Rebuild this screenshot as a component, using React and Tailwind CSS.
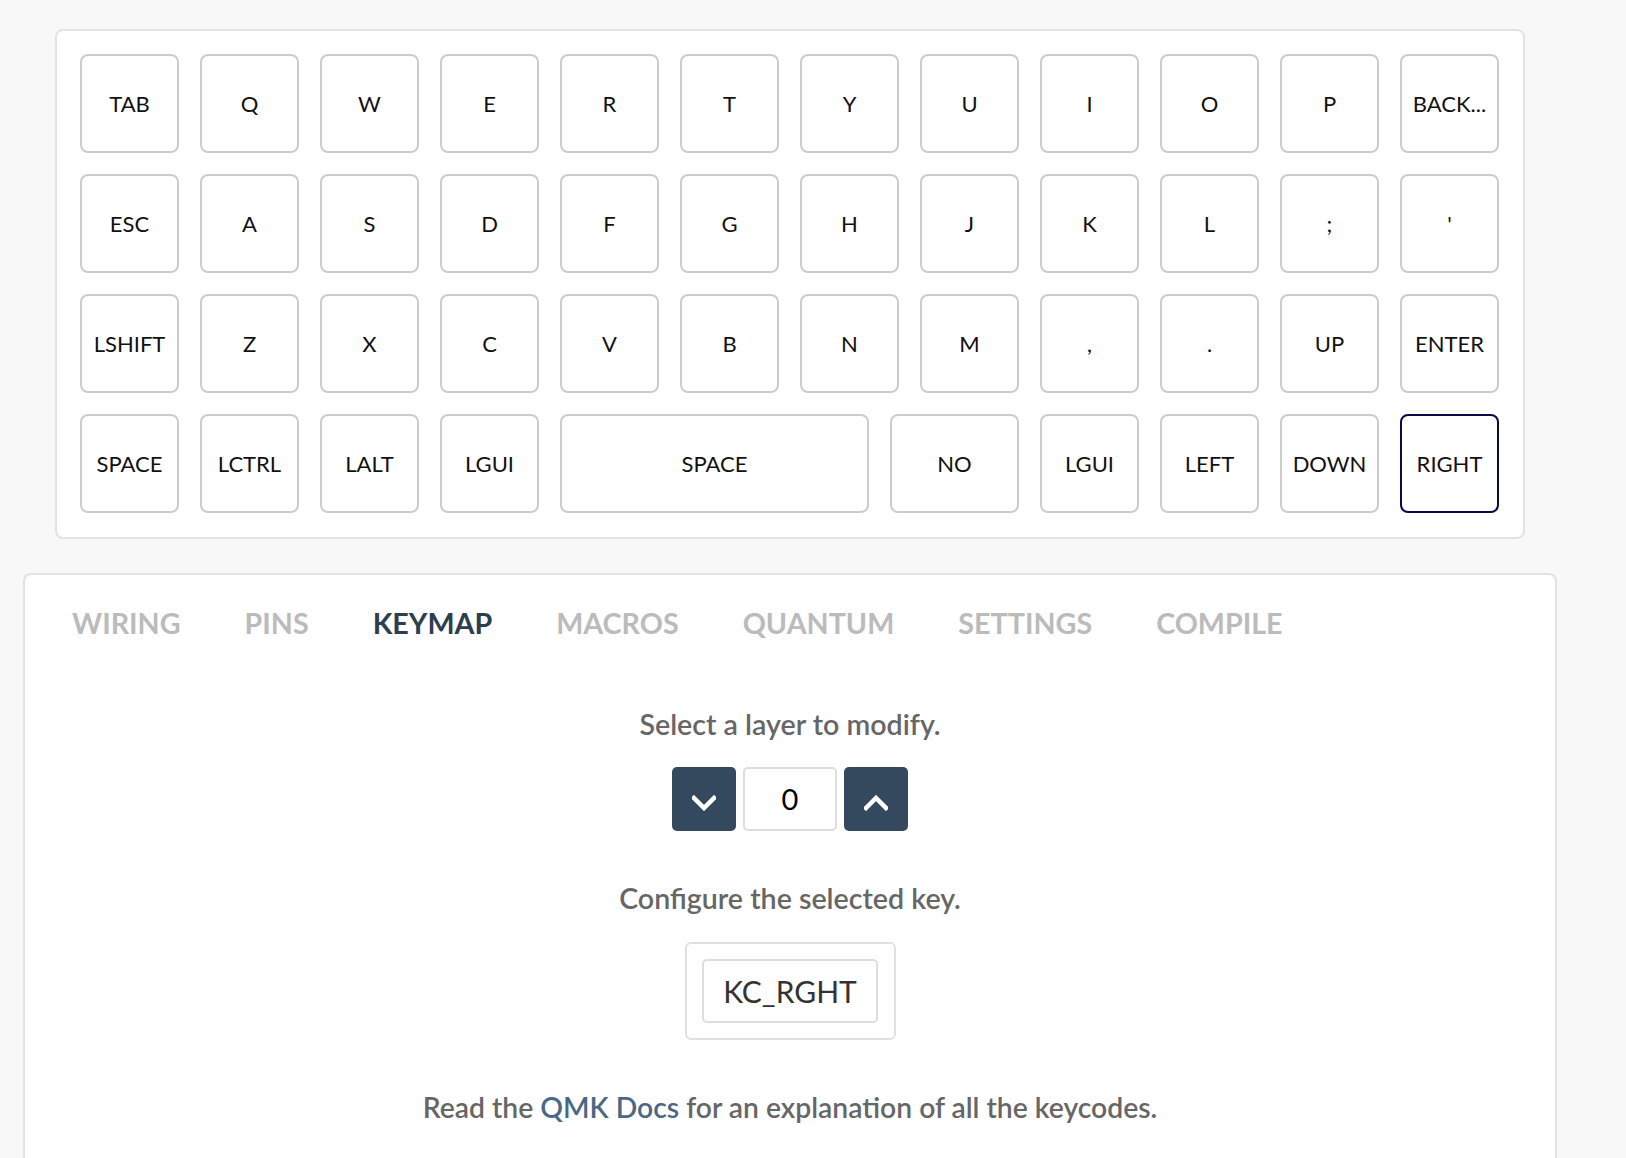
import React from 'react';

const rows = [
  [['TAB'], ['Q'], ['W'], ['E'], ['R'], ['T'], ['Y'], ['U'], ['I'], ['O'], ['P'], ['BACK...']],
  [['ESC'], ['A'], ['S'], ['D'], ['F'], ['G'], ['H'], ['J'], ['K'], ['L'], [';'], ["'"]],
  [['LSHIFT'], ['Z'], ['X'], ['C'], ['V'], ['B'], ['N'], ['M'], [','], ['.'], ['UP'], ['ENTER']],
  [['SPACE'], ['LCTRL'], ['LALT'], ['LGUI'], ['SPACE', 'wide'], ['NO', 'mid'], ['LGUI'], ['LEFT'], ['DOWN'], ['RIGHT', 'one', true]],
];

const widths = {
  one: 'w-[99px]',
  mid: 'w-[129px]',
  wide: 'w-[309px]',
};

const tabs = ['WIRING', 'PINS', 'KEYMAP', 'MACROS', 'QUANTUM', 'SETTINGS', 'COMPILE'];

const Key = ({ label, size = 'one', selected }) => (
  <div
    className={`${widths[size]} h-[99px] shrink-0 flex items-center justify-center rounded-[8px] border-2 bg-white text-[22px] text-[#111] ${
      selected ? 'border-[#0a0a45]' : 'border-[#cccccc]'
    }`}
  >
    {label}
  </div>
);

const Chevron = ({ up }) => (
  <svg width="24" height="16" viewBox="0 0 24 16" className="mt-2">
    <polyline
      points={up ? '2,13 12,3 22,13' : '2,3 12,13 22,3'}
      fill="none"
      stroke="white"
      strokeWidth="4.5"
      strokeLinecap="square"
    />
  </svg>
);

export default function App() {
  return (
    <div className="min-h-[1158px] bg-[#f8f8f8] pt-[29px] font-['Lato','Liberation_Sans',sans-serif]">
      <div className="ml-[55px] w-[1470px] rounded-[8px] border-2 border-[#e2e2e2] bg-white pt-[23px] px-[23px] pb-[24px]">
        <div className="flex flex-col gap-[21px]">
          {rows.map((row, i) => (
            <div key={i} className="flex gap-[21px]">
              {row.map(([label, size, selected], j) => (
                <Key key={j} label={label} size={size} selected={selected} />
              ))}
            </div>
          ))}
        </div>
      </div>

      <div className="ml-[23px] mt-[34px] w-[1534px] h-[620px] rounded-t-[8px] border-2 border-b-0 border-[#e2e2e2] bg-white pt-[33px]">
        <div className="flex pl-[15px]">
          {tabs.map((t) => (
            <div
              key={t}
              className={`px-8 text-[28.7px] leading-[30px] font-bold ${
                t === 'KEYMAP' ? 'text-[#2c3e50]' : 'text-[#bbbbbb]'
              }`}
            >
              {t}
            </div>
          ))}
        </div>

        <div className="flex flex-col items-center">
          <p className="mt-[72px] text-[28.6px] leading-[28px] font-semibold text-[#666666]">
            Select a layer to modify.
          </p>
          <div className="mt-[29px] flex gap-[7px]">
            <button className="w-[64px] h-[64px] rounded-[5px] bg-[#34495e] flex items-center justify-center">
              <Chevron />
            </button>
            <div className="w-[94px] h-[64px] rounded-[5px] border-2 border-[#dddddd] flex items-center justify-center text-[29px] text-black">
              0
            </div>
            <button className="w-[64px] h-[64px] rounded-[5px] bg-[#34495e] flex items-center justify-center">
              <Chevron up />
            </button>
          </div>

          <p className="mt-[53px] text-[28.6px] leading-[28px] font-semibold text-[#666666]">
            Configure the selected key.
          </p>

          <div className="mt-[30px] w-[211px] h-[98px] rounded-[6px] border-2 border-[#e0e0e0] flex items-center justify-center">
            <div className="w-[176px] h-[64px] rounded-[5px] border-2 border-[#dddddd] flex items-center justify-center text-[30px] text-[#333333]">
              KC_RGHT
            </div>
          </div>

          <p className="mt-[53px] text-[28.3px] leading-[28px] font-semibold text-[#666666]">
            Read the <a className="text-[#4a6785]">QMK Docs</a> for an explanation of all the keycodes.
          </p>
        </div>
      </div>
    </div>
  );
}
